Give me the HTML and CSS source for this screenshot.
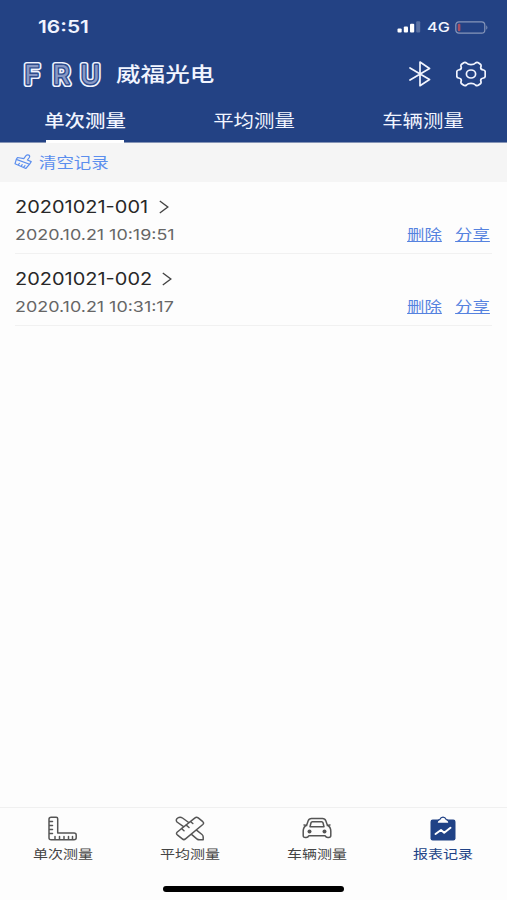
FILE: index.html
```html
<!DOCTYPE html>
<html lang="zh-CN">
<head>
<meta charset="utf-8">
<title>报表记录</title>
<link rel="stylesheet" href="styles.css">
</head>
<body>
<div class="app">
  <header class="header">
    <div class="status">
      <span class="time wide">16:51</span>
      <div class="signals">
        <svg width="24" height="12" viewBox="0 0 24 12" fill="#fff"><rect x=".5" y="7.5" width="4.2" height="4" rx="1"/><rect x="6.8" y="5.5" width="4.2" height="6" rx="1"/><rect x="13" y="2.8" width="4.2" height="8.7" rx="1"/><rect x="19.2" y=".3" width="4" height="11.2" rx="1" opacity=".25"/></svg>
        <span class="net wide">4G</span>
        <svg width="34" height="13" viewBox="0 0 34 13"><rect x=".8" y=".8" width="29" height="11.4" rx="3.2" fill="none" stroke="#8796b9" stroke-width="1.2"/><rect x="2.8" y="2.8" width="2.6" height="7.4" rx="1" fill="#a94f62"/><path d="M31.3 4.2q2.2 2.3 0 4.6z" fill="#8796b9"/></svg>
      </div>
    </div>
    <div class="brand">
      <svg class="logo" width="84" height="30" viewBox="0 0 84 30"><defs><text id="mark" y="24.500" x="3.500 32 59.500">FRU</text></defs><use href="#mark" class="rim"/><use href="#mark" class="gap"/><use href="#mark" class="core"/></svg>
      <span class="name wide">威福光电</span>
      <svg class="bluetooth" width="22" height="26" viewBox="0 0 22 26" fill="none" stroke="#f2f5ff" stroke-width="1.7" stroke-linejoin="round" stroke-linecap="round"><path d="M1 7l19.5 11.5L11 24.7V1l9.5 6.5L1 19"/></svg>
      <svg class="gear" width="30" height="26" viewBox="0 0 30 26" fill="none" stroke="#f2f5ff" stroke-width="1.7" stroke-linejoin="round"><path d="M7 2.200Q9 .7 10.500 2Q12 3.600 15 3.600Q18 3.600 19.500 2Q21 .7 23 2.200L24.700 3.500Q25.500 4.500 24.700 6.300Q24.500 8.600 27.500 9Q29.200 9.200 29.200 11V15Q29.200 16.800 27.500 17Q24.500 17.400 24.700 19.700Q25.500 21.500 24.700 22.500L23 23.800Q21 25.300 19.500 24Q18 22.400 15 22.400Q12 22.400 10.500 24Q9 25.300 7 23.800L5.300 22.500Q4.500 21.500 5.300 19.700Q5.500 17.400 2.500 17Q.8 16.800.8 15V11Q.8 9.200 2.500 9Q5.500 8.600 5.300 6.300Q4.500 4.500 5.300 3.500z"/><ellipse cx="15" cy="13" rx="4.6" ry="4"/></svg>
    </div>
    <nav class="tabs">
      <div class="tab active"><span class="wide">单次测量</span></div>
      <div class="tab"><span class="wide">平均测量</span></div>
      <div class="tab"><span class="wide">车辆测量</span></div>
    </nav>
  </header>
  <div class="toolbar">
    <svg width="19" height="16" viewBox="0 0 19 16" fill="none" stroke="#5b8eee" stroke-width="1.2" stroke-linejoin="round" stroke-linecap="round"><path d="M3.500 3.500L9.800 4.600 12 1.600Q13.200.3 14.800 1.100 16.200 2 15.300 3.500L13.400 6l3.800 1.600-1.600 2.600L2.300 5.400zM2.300 5.400L1 9.800l10.800 4.700 3.800-4.300M4.200 11l1.200-1.600M7 12.300l1.200-1.600M9.600 13.400l1.400-1.800"/></svg>
    <span class="wide">清空记录</span>
  </div>
  <main class="list">
    <article class="record">
      <div class="title"><span class="id first wide">20201021-001</span><svg width="10" height="14" viewBox="0 0 10 14"><path d="M.8 1l8 6-8 6"/></svg></div>
      <div class="meta"><span class="date wide">2020.10.21 10:19:51</span><span class="link wide">删除</span><span class="link wide">分享</span></div>
    </article>
    <article class="record">
      <div class="title"><span class="id wide">20201021-002</span><svg width="10" height="14" viewBox="0 0 10 14"><path d="M.8 1l8 6-8 6"/></svg></div>
      <div class="meta"><span class="date wide">2020.10.21 10:31:17</span><span class="link wide">删除</span><span class="link wide">分享</span></div>
    </article>
  </main>
  <footer class="footer">
    <nav class="bottom">
      <div class="item">
        <svg width="30" height="26" viewBox="0 0 30 26"><path d="M3.200 1.200h5Q9.700 1.200 9.700 2.700V17H26q2.200 0 2.200 2v2.800q0 2-2.200 2H3.200Q1 23.800 1 21.800V3.200q0-2 2.200-2zM1 5.500h3.500M1 9.500h3.500M1 13.500h3.500M1 17.500h3.500M7 23.500v-3M11.500 23.500v-3M16 23.500v-3M20.500 23.500v-3M24.500 23.500v-3"/></svg>
        <span class="wide">单次测量</span>
      </div>
      <div class="item">
        <svg width="30" height="26" viewBox="0 0 30 26"><path d="M20 1.900q1.500-1.400 3.200 0l4.600 3.800q1.600 1.400 0 2.800L10.500 22.900q-1.600 1.400-3.200 0l-5-4.100q-1.600-1.400 0-2.800zM6.500 12.500l2.500 2.200M11 8.900l3 2.600M15.500 5.500l2.300 2M8.500 10.600L2 6Q.3 3.700 2.700 2q2.400-1.700 4.800 0l6.200 4.500M21.500 14.200l5.500 4.300q1.200 1 1.200 2.500v2.800h-3.700q-1.500 0-2.700-1l-5.600-4.600"/></svg>
        <span class="wide">平均测量</span>
      </div>
      <div class="item">
        <svg width="30" height="26" viewBox="0 0 30 26"><path d="M9.500 2.500h11q2.500 0 3.300 2.300l1.500 4.200q3.500 2.200 3.500 6v4.500q0 2-2.200 2h-.8q-1.800 0-2.800-1.800H7q-1 1.800-2.800 1.800h-.8q-2.200 0-2.200-2V15q0-3.800 3.500-6l1.500-4.200Q7 2.500 9.500 2.500M4.700 9.500L2 9M25.300 9.500L28 9M10.300 5.800h9.400q1 0 1.300 1l1 4H8l1-4q.3-1 1.300-1z"/><g fill="#555" stroke="none"><circle cx="7.500" cy="15.500" r="2"/><circle cx="22.500" cy="15.500" r="2"/></g></svg>
        <span class="wide">车辆测量</span>
      </div>
      <div class="item current">
        <svg width="30" height="26" viewBox="0 0 30 26"><rect x="2.500" y="3.500" width="25" height="21" rx="2.200" fill="#204286" stroke="none"/><path d="M9 7.300h12q0-3-2.800-3.800Q17.200 1.200 15 1.200t-3.200 2.300Q9 4.300 9 7.300z" fill="#fdfdfd" stroke="#204286" stroke-width="1.200"/><path d="M7.500 18l5.500-4 3.200 2.800 6.300-5" stroke="#fff" stroke-width="2"/></svg>
        <span class="wide">报表记录</span>
      </div>
    </nav>
    <div class="home"></div>
  </footer>
</div>
</body>
</html>
```
FILE: styles.css
```css
* { box-sizing: border-box; }
body {
  margin: 0;
  background: #fdfdfd;
  font-family: Inter, "Noto Sans CJK SC", sans-serif;
}
.app { height: 900px; display: flex; flex-direction: column; }
svg { display: block; flex: none; }
.wide {
  display: inline-block;
  white-space: nowrap;
  transform: scaleX(1.2);
}
.header {
  height: 143px;
  background: #234284;
  border-bottom: 1px solid #8594b6;
  color: #f2f5ff;
  display: flex;
  flex-direction: column;
}
.status {
  height: 54px;
  padding: 0 18px 0 38px;
  display: flex;
  justify-content: space-between;
  align-items: center;
}
.time { font-size: 17px; font-weight: 600; transform: scaleX(1.23); transform-origin: left; }
.signals { display: flex; align-items: center; }
.net { font-size: 13.500px; font-weight: 500; width: 19px; margin: 0 9px 0 6px; transform-origin: left; }
.brand { height: 40px; padding: 0 22px 0 21px; display: flex; align-items: center; }
.logo { overflow: visible; }
.logo text {
  font-family: Inter, sans-serif;
  font-size: 26px;
  font-weight: 400;
}
.logo use { stroke-linejoin: round; }
.rim { fill: #f0f4ff; stroke: #f0f4ff; stroke-width: 6.200px; }
.gap { fill: #2d4b8c; stroke: #2d4b8c; stroke-width: 2.800px; }
.core { fill: #8798c4; }
.name { font-size: 20.500px; font-weight: 500; margin-left: 11px; margin-top: -2px; transform-origin: left; }
.bluetooth { margin-left: auto; }
.gear { margin-left: 25px; margin-right: -1px; }
.tabs { flex: 1; display: grid; grid-template-columns: repeat(3, 1fr); }
.tab { position: relative; display: flex; justify-content: center; align-items: center; font-size: 17px; padding: 5px 0 2px 0; }
.tab.active { font-weight: 500; }
.tab.active::after {
  content: "";
  position: absolute;
  bottom: -1px;
  left: 46px;
  width: 78px;
  height: 3px;
  background: #fff;
}
.toolbar {
  height: 39px;
  padding: 0 0 1px 14px;
  background: #f5f5f5;
  display: flex;
  align-items: center;
  gap: 6px;
  color: #5b8eee;
  font-size: 14.500px;
}
.toolbar .wide { transform-origin: left; margin-top: -2px; }
.list { flex: 1; padding: 0 15px; }
.record { height: 72px; padding-top: 12px; border-bottom: 1px solid #f1f1f1; }
.title { height: 26px; display: flex; align-items: center; }
.title path { fill: none; stroke: #444; stroke-width: 1.400; }
.id { width: 147px; color: #282828; font-size: 17px; transform: scaleX(1.175); transform-origin: left; }
.id.first { width: 144px; }
.meta { height: 28px; display: flex; align-items: center; font-size: 14.500px; }
.date { color: #666; margin-right: auto; transform: scaleX(1.235); transform-origin: left; }
.link { width: 29px; margin: -2px 5px 0 14px; color: #5582df; text-decoration: underline; text-underline-offset: 1px; text-decoration-thickness: 1px; }
.footer { height: 93px; border-top: 1px solid #f0f0f0; }
.bottom { height: 78px; display: grid; grid-template-columns: repeat(4, 1fr); }
.item {
  padding-top: 8px;
  display: flex;
  flex-direction: column;
  align-items: center;
  gap: 4px;
  color: #444;
  font-size: 12.500px;
  line-height: 18px;
}
.item svg { fill: none; stroke: #555; stroke-width: 1.500; stroke-linejoin: round; stroke-linecap: round; }
.item.current { color: #204286; padding-right: 2px; }
.home { width: 181px; height: 6px; margin: 0 auto; border-radius: 3px; background: #000; }
```
